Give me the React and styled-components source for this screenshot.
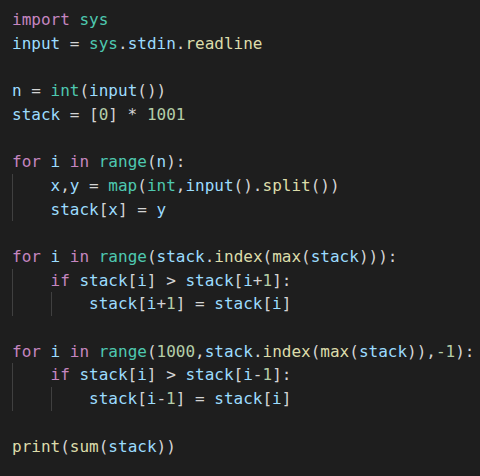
import React from 'react';
import styled, { createGlobalStyle } from 'styled-components';

const GlobalStyle = createGlobalStyle`
  html, body {
    margin: 0;
    padding: 0;
    background: #1e1e1e;
    overflow: hidden;
  }
`;

const colors = {
  kw: '#c586c0',
  v: '#9cdcfe',
  cls: '#4ec9b0',
  fn: '#dcdcaa',
  num: '#b5cea8',
  op: '#d4d4d4',
  dim: '#8a8a8a',
};

const Editor = styled.div`
  width: 480px;
  height: 476px;
  background: #1e1e1e;
  overflow: hidden;
  padding-left: 12px;
  box-sizing: border-box;
  font-family: "DejaVu Sans Mono", "Liberation Mono", monospace;
  font-size: 16px;
  color: #d4d4d4;
`;

const Lines = styled.div`
  display: flex;
  flex-direction: column;
  margin-top: -15.55px;
`;

const Line = styled.div`
  display: flex;
  height: 23.7px;
  line-height: 23.7px;
  white-space: pre;
`;

const Indent = styled.span`
  display: inline-block;
  width: 38.5px;
  height: 100%;
  box-sizing: border-box;
  border-left: 1px solid ${(p) => (p.$guide ? '#404040' : 'transparent')};
`;

const Token = styled.span`
  color: ${(p) => colors[p.$kind] || colors.op};
`;

// [indent level, tokens]
const code = [
  [0, [['dim', '  ʼʼ']]],
  [0, [['kw', 'import'], ['op', ' '], ['cls', 'sys']]],
  [0, [['v', 'input'], ['op', ' = '], ['cls', 'sys'], ['op', '.'], ['v', 'stdin'], ['op', '.'], ['fn', 'readline']]],
  [0, []],
  [0, [['v', 'n'], ['op', ' = '], ['cls', 'int'], ['op', '('], ['v', 'input'], ['op', '())']]],
  [0, [['v', 'stack'], ['op', ' = ['], ['num', '0'], ['op', '] * '], ['num', '1001']]],
  [0, []],
  [0, [['kw', 'for'], ['op', ' '], ['v', 'i'], ['op', ' '], ['kw', 'in'], ['op', ' '], ['cls', 'range'], ['op', '('], ['v', 'n'], ['op', '):']]],
  [1, [['v', 'x'], ['op', ','], ['v', 'y'], ['op', ' = '], ['cls', 'map'], ['op', '('], ['cls', 'int'], ['op', ','], ['v', 'input'], ['op', '().'], ['fn', 'split'], ['op', '())']]],
  [1, [['v', 'stack'], ['op', '['], ['v', 'x'], ['op', '] = '], ['v', 'y']]],
  [0, []],
  [0, [['kw', 'for'], ['op', ' '], ['v', 'i'], ['op', ' '], ['kw', 'in'], ['op', ' '], ['cls', 'range'], ['op', '('], ['v', 'stack'], ['op', '.'], ['fn', 'index'], ['op', '('], ['fn', 'max'], ['op', '('], ['v', 'stack'], ['op', '))):']]],
  [1, [['kw', 'if'], ['op', ' '], ['v', 'stack'], ['op', '['], ['v', 'i'], ['op', '] > '], ['v', 'stack'], ['op', '['], ['v', 'i'], ['op', '+'], ['num', '1'], ['op', ']:']]],
  [2, [['v', 'stack'], ['op', '['], ['v', 'i'], ['op', '+'], ['num', '1'], ['op', '] = '], ['v', 'stack'], ['op', '['], ['v', 'i'], ['op', ']']]],
  [0, []],
  [0, [['kw', 'for'], ['op', ' '], ['v', 'i'], ['op', ' '], ['kw', 'in'], ['op', ' '], ['cls', 'range'], ['op', '('], ['num', '1000'], ['op', ','], ['v', 'stack'], ['op', '.'], ['fn', 'index'], ['op', '('], ['fn', 'max'], ['op', '('], ['v', 'stack'], ['op', ')),'], ['num', '-1'], ['op', '):']]],
  [1, [['kw', 'if'], ['op', ' '], ['v', 'stack'], ['op', '['], ['v', 'i'], ['op', '] > '], ['v', 'stack'], ['op', '['], ['v', 'i'], ['op', '-'], ['num', '1'], ['op', ']:']]],
  [2, [['v', 'stack'], ['op', '['], ['v', 'i'], ['op', '-'], ['num', '1'], ['op', '] = '], ['v', 'stack'], ['op', '['], ['v', 'i'], ['op', ']']]],
  [0, []],
  [0, [['fn', 'print'], ['op', '('], ['fn', 'sum'], ['op', '('], ['v', 'stack'], ['op', '))']]],
];

const App = () => {
  return (
    <Editor>
      <GlobalStyle />
      <Lines>
        {code.map(([level, tokens], i) => (
          <Line key={i}>
            {Array.from({ length: level }).map((_, k) => (
              <Indent key={k} $guide />
            ))}
            {tokens.length === 0 ? ' ' : tokens.map(([kind, text], j) => (
              <Token key={j} $kind={kind}>{text}</Token>
            ))}
          </Line>
        ))}
      </Lines>
    </Editor>
  );
};

export default App;
